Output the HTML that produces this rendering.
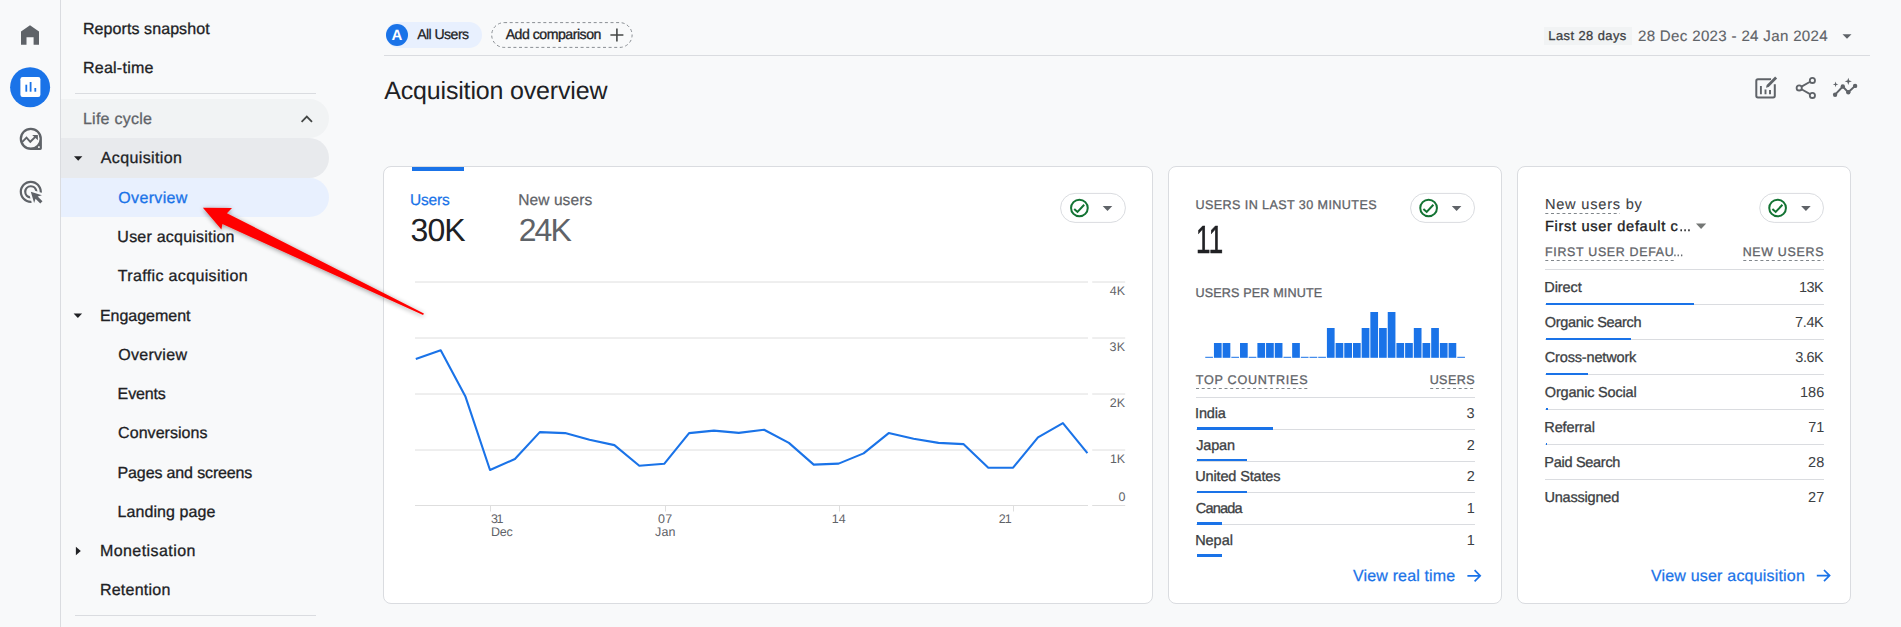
<!DOCTYPE html>
<html lang="en"><head><meta charset="utf-8"><title>Acquisition overview</title>
<style>
html,body{margin:0;padding:0}
body{width:1901px;height:627px;overflow:hidden;position:relative;background:#f8f9fa;font-family:"Liberation Sans",sans-serif;text-rendering:geometricPrecision;}
.t{position:absolute;white-space:nowrap;margin:0;padding:0}
.r{position:absolute}
svg{position:absolute;left:0;top:0;overflow:visible}
</style></head><body>
<div class="r" style="left:60px;top:0px;width:1px;height:627px;background:#dadce0;"></div>
<svg width="61" height="627" viewBox="0 0 61 627">
<path d="M21 44.8V31.4L30 25.3L39 31.4V44.8H33.6V37.3H26.5V44.8Z" fill="#5f6368"/>
<circle cx="30.1" cy="87.2" r="20" fill="#1a73e8"/>
<rect x="20.4" y="77" width="20" height="20" rx="2.2" fill="#fff"/>
<rect x="25.4" y="84.7" width="1.8" height="7" fill="#1a73e8"/>
<rect x="29.7" y="82" width="1.8" height="9.7" fill="#1a73e8"/>
<rect x="34.4" y="88" width="1.8" height="3.7" fill="#1a73e8"/>
<path fill-rule="evenodd" fill="#5f6368" d="M30.8 127.7A11.1 11.1 0 0 1 41.9 138.8V148.3A1.6 1.6 0 0 1 40.3 149.9H30.8A11.1 11.1 0 0 1 30.8 127.7ZM30.8 130A8.8 8.8 0 1 0 30.8 147.6A8.8 8.8 0 1 0 30.8 130ZM38.1 146.3h1.6v1.6h-1.6z"/>
<path d="M22.1 142.1l4.4-4.4 3.8 4.1 5-4.9" fill="none" stroke="#5f6368" stroke-width="1.9"/>
<path d="M32.2 135h5.7v5.2z" fill="#5f6368"/>
<g transform="translate(17.48 178.48) scale(1.11)"><path fill="#5f6368" d="M11.71 17.99A5.993 5.993 0 0 1 6 12c0-3.31 2.69-6 6-6 3.22 0 5.84 2.53 5.99 5.71l-2.1-.63a3.999 3.999 0 1 0-4.81 4.81l.63 2.1zM22 12c0 .3-.01.6-.04.9l-1.970-.59c.01-.1.01-.21.01-.31 0-4.42-3.58-8-8-8s-8 3.58-8 8 3.580 8 8 8c.1 0 .21 0 .31-.01l.59 1.970c-.3.03-.6.04-.9.04-5.520 0-10-4.480-10-10S6.480 2 12 2s10 4.480 10 10zm-3.770 4.260L22 15l-10-3 3 10 1.260-3.770 4.270 4.270 1.980-1.980-4.280-4.260z"/></g>
</svg>
<div class="r" style="left:61px;top:99px;width:268px;height:39px;background:#f1f3f4;border-radius:0 20px 20px 0"></div>
<div class="r" style="left:61px;top:138px;width:268px;height:39.5px;background:#e8eaed;border-radius:0 20px 20px 0"></div>
<div class="r" style="left:61px;top:177.5px;width:268px;height:39.5px;background:#e8f0fe;border-radius:0 20px 20px 0"></div>
<div class="r" style="left:75px;top:93px;width:241px;height:1px;background:#dadce0;"></div>
<div class="r" style="left:75px;top:615px;width:241px;height:1px;background:#dadce0;"></div>
<div class="t" style="font-size:16px;line-height:17px;top:21px;color:#202124;letter-spacing:0.081px;-webkit-text-stroke:0.3px #202124;left:82.99px;">Reports snapshot</div>
<div class="t" style="font-size:16px;line-height:17px;top:60px;color:#202124;letter-spacing:0.245px;-webkit-text-stroke:0.3px #202124;left:82.99px;">Real-time</div>
<div class="t" style="font-size:16px;line-height:17px;top:111px;color:#5f6368;letter-spacing:0.253px;-webkit-text-stroke:0.3px #5f6368;left:82.94px;">Life cycle</div>
<div class="t" style="font-size:16px;line-height:17px;top:150px;color:#202124;letter-spacing:0.378px;-webkit-text-stroke:0.3px #202124;left:100.77px;">Acquisition</div>
<div class="t" style="font-size:16px;line-height:17px;top:190px;color:#1a73e8;letter-spacing:0.347px;-webkit-text-stroke:0.3px #1a73e8;left:118.25px;">Overview</div>
<div class="t" style="font-size:16px;line-height:17px;top:229px;color:#202124;letter-spacing:0.222px;-webkit-text-stroke:0.3px #202124;left:117.37px;">User acquisition</div>
<div class="t" style="font-size:16px;line-height:17px;top:268px;color:#202124;letter-spacing:0.345px;-webkit-text-stroke:0.3px #202124;left:117.85px;">Traffic acquisition</div>
<div class="t" style="font-size:16px;line-height:17px;top:308px;color:#202124;letter-spacing:-0.013px;-webkit-text-stroke:0.3px #202124;left:99.89px;">Engagement</div>
<div class="t" style="font-size:16px;line-height:17px;top:347px;color:#202124;letter-spacing:0.304px;-webkit-text-stroke:0.3px #202124;left:118.15px;">Overview</div>
<div class="t" style="font-size:16px;line-height:17px;top:386px;color:#202124;letter-spacing:-0.125px;-webkit-text-stroke:0.3px #202124;left:117.59px;">Events</div>
<div class="t" style="font-size:16px;line-height:17px;top:425px;color:#202124;letter-spacing:0.045px;-webkit-text-stroke:0.3px #202124;left:118.10px;">Conversions</div>
<div class="t" style="font-size:16px;line-height:17px;top:465px;color:#202124;letter-spacing:-0.137px;-webkit-text-stroke:0.3px #202124;left:117.59px;">Pages and screens</div>
<div class="t" style="font-size:16px;line-height:17px;top:504px;color:#202124;letter-spacing:0.076px;-webkit-text-stroke:0.3px #202124;left:117.59px;">Landing page</div>
<div class="t" style="font-size:16px;line-height:17px;top:543px;color:#202124;letter-spacing:0.438px;-webkit-text-stroke:0.3px #202124;left:99.89px;">Monetisation</div>
<div class="t" style="font-size:16px;line-height:17px;top:582px;color:#202124;letter-spacing:0.243px;-webkit-text-stroke:0.3px #202124;left:99.89px;">Retention</div>
<svg width="340" height="627" viewBox="0 0 340 627">
<path d="M301.6 121.8l5.2-5.2 5.2 5.2" fill="none" stroke="#444746" stroke-width="1.8"/>
<path d="M74 156.2h8.4l-4.2 4.6z" fill="#202124"/>
<path d="M73.600 313.400h8.500l-4.250 4.700z" fill="#202124"/>
<path d="M75.900 546.800v8.500l4.900-4.250z" fill="#202124"/>
</svg>
<div class="r" style="left:386px;top:22px;width:96px;height:26px;background:#e8f0fe;border-radius:13px"></div>
<div class="r" style="left:386px;top:24px;width:22px;height:22px;background:#1a73e8;border-radius:11px"></div>
<div class="t" style="font-size:15px;line-height:17px;top:27px;color:#fff;font-weight:700;left:391.60px;">A</div>
<div class="t" style="font-size:14.1px;line-height:16px;top:26px;color:#202124;letter-spacing:-0.559px;-webkit-text-stroke:0.25px #202124;left:417.17px;">All Users</div>
<svg width="700" height="60"><rect x="491.7" y="22.6" width="140.4" height="24.8" rx="12.4" fill="none" stroke="#8a8f94" stroke-width="1" stroke-dasharray="3 2.6"/></svg>
<div class="t" style="font-size:14.1px;line-height:16px;top:26px;color:#202124;letter-spacing:-0.474px;-webkit-text-stroke:0.3px #202124;left:505.67px;">Add comparison</div>
<svg width="700" height="60"><path d="M610.4 35h13M616.9 28.5v13" stroke="#444746" stroke-width="1.6" fill="none"/></svg>
<div class="r" style="left:384px;top:55px;width:1486px;height:1px;background:#dadce0;"></div>
<div class="r" style="left:1544px;top:27px;width:88px;height:18px;background:#f1f3f4;"></div>
<div class="t" style="font-size:12.9px;line-height:15px;top:28px;color:#3c4043;letter-spacing:0.443px;-webkit-text-stroke:0.3px #3c4043;left:1548.34px;">Last 28 days</div>
<div class="t" style="font-size:15.1px;line-height:17px;top:28px;color:#5f6368;letter-spacing:0.318px;-webkit-text-stroke:0.15px #5f6368;left:1637.94px;">28 Dec 2023 - 24 Jan 2024</div>
<svg width="1901" height="120"><path d="M1842.5 34.2h9l-4.5 4.6z" fill="#5f6368"/></svg>
<div class="t" style="font-size:25px;line-height:28px;top:77px;color:#202124;letter-spacing:-0.174px;left:384.25px;">Acquisition overview</div>
<svg width="1901" height="120" viewBox="0 0 1901 120">
<g fill="none" stroke="#5f6368" stroke-width="2">
<path d="M1774.8 84.3v11.5a1.6 1.6 0 0 1-1.6 1.6h-15.3a1.6 1.6 0 0 1-1.6-1.6v-14.900a1.6 1.6 0 0 1 1.6-1.6h13.2"/>
<path d="M1760.9 86.1v8.2M1765.5 89.4v4.9M1770 89.9v4.4" stroke-width="1.9"/>
</g>
<path d="M1766 87.800l0.700-2.800 8.400-8.400 2 2-8.400 8.400z" fill="#5f6368" stroke="#f8f9fa" stroke-width="1.1" paint-order="stroke"/>
<g fill="none" stroke="#5f6368" stroke-width="1.8">
<circle cx="1812.4" cy="80.4" r="2.6"/><circle cx="1799.2" cy="87.9" r="2.6"/><circle cx="1812.4" cy="95.4" r="2.6"/>
<path d="M1801.5 86.6l8.6-4.9M1801.5 89.2l8.6 4.9"/>
</g>
<path d="M1835.1 94.7l7.7-8.2 5.5 5.8 6.8-6.4" fill="none" stroke="#5f6368" stroke-width="1.9"/>
<g fill="#5f6368"><circle cx="1835.1" cy="94.7" r="2.2"/><circle cx="1842.8" cy="86.5" r="2.2"/><circle cx="1848.3" cy="92.3" r="2.2"/><circle cx="1855.1" cy="85.9" r="2.2"/>
<path d="M1848.3 77.700l.9 2.700 2.700.9-2.700.9-.9 2.700-.9-2.700-2.700-.9 2.700-.9z"/>
<path d="M1835.6 81.6l.7 2.1 2.1.7-2.1.7-.7 2.1-.7-2.1-2.1-.7 2.1-.7z"/></g>
</svg>
<div class="r" style="left:383px;top:166px;width:768px;height:436px;background:#fff;border:1px solid #dadce0;border-radius:8px"></div>
<div class="r" style="left:1168px;top:166px;width:332px;height:436px;background:#fff;border:1px solid #dadce0;border-radius:8px"></div>
<div class="r" style="left:1517px;top:166px;width:332px;height:436px;background:#fff;border:1px solid #dadce0;border-radius:8px"></div>
<svg width="1901" height="627"><rect x="1060.55" y="193.4" width="64.90" height="29" rx="14.5" fill="#fff" stroke="#dadce0"/>
<circle cx="1079.4" cy="208" r="8.35" fill="none" stroke="#137333" stroke-width="2"/>
<path d="M1074.20 208.9l3.3 3 6.7-7.100" fill="none" stroke="#137333" stroke-width="2"/>
<path d="M1102.70 206h9.6l-4.8 5z" fill="#5f6368"/></svg>
<svg width="1901" height="627"><rect x="1410.55" y="193.4" width="64.00" height="29" rx="14.5" fill="#fff" stroke="#dadce0"/>
<circle cx="1428.6" cy="208" r="8.35" fill="none" stroke="#137333" stroke-width="2"/>
<path d="M1423.40 208.9l3.3 3 6.7-7.100" fill="none" stroke="#137333" stroke-width="2"/>
<path d="M1451.80 206h9.6l-4.8 5z" fill="#5f6368"/></svg>
<svg width="1901" height="627"><rect x="1759.70" y="193.4" width="63.80" height="29" rx="14.5" fill="#fff" stroke="#dadce0"/>
<circle cx="1777.6" cy="208" r="8.35" fill="none" stroke="#137333" stroke-width="2"/>
<path d="M1772.40 208.9l3.3 3 6.7-7.100" fill="none" stroke="#137333" stroke-width="2"/>
<path d="M1801.10 206h9.6l-4.8 5z" fill="#5f6368"/></svg>
<div class="r" style="left:412px;top:167px;width:52px;height:4px;background:#1a73e8;"></div>
<div class="t" style="font-size:15.5px;line-height:17px;top:192px;color:#1a73e8;letter-spacing:-0.131px;-webkit-text-stroke:0.25px #1a73e8;left:409.91px;">Users</div>
<div class="t" style="font-size:32px;line-height:36px;top:212px;color:#202124;letter-spacing:-0.985px;left:410.58px;">30K</div>
<div class="t" style="font-size:15.5px;line-height:17px;top:192px;color:#5f6368;letter-spacing:0.089px;-webkit-text-stroke:0.25px #5f6368;left:518.23px;">New users</div>
<div class="t" style="font-size:32px;line-height:36px;top:212px;color:#5f6368;letter-spacing:-1.943px;left:518.70px;">24K</div>
<svg width="1901" height="627"><path d="M415 282H1088M1092.2 282H1125.2" stroke="#dedede" stroke-width="1" fill="none"/><path d="M415 338H1088M1092.2 338H1125.2" stroke="#dedede" stroke-width="1" fill="none"/><path d="M415 394H1088M1092.2 394H1125.2" stroke="#dedede" stroke-width="1" fill="none"/><path d="M415 450H1088M1092.2 450H1125.2" stroke="#dedede" stroke-width="1" fill="none"/><path d="M415 505.5H1088M1092.2 505.5H1125.2" stroke="#dedede" stroke-width="1" fill="none"/><path d="M490.5 506v5.5" stroke="#dedede" stroke-width="1"/><path d="M665.5 506v5.5" stroke="#dedede" stroke-width="1"/><path d="M839.5 506v5.5" stroke="#dedede" stroke-width="1"/><path d="M1013.5 506v5.5" stroke="#dedede" stroke-width="1"/><polyline fill="none" stroke="#1a73e8" stroke-width="2.1" stroke-linejoin="round" points="415.8,358.9 440.7,350.2 465.3,396.2 490,470 514.9,459 539.8,432.1 565.1,433.1 589.5,439.8 614.4,445.1 639.3,465.7 664.2,463.8 689.1,433.1 713.9,430.6 738.8,432.9 764.1,429.7 788.9,442.9 813.7,464.6 838.6,463.6 863.6,453.4 888.7,433.1 913.6,438.7 938.5,442.9 963.4,444.1 988.3,467.7 1013.1,467.7 1038,437.3 1062.9,423.2 1087.4,453.2"/></svg>
<div class="t" style="font-size:12.5px;line-height:14px;top:284px;color:#5f6368;letter-spacing:-0.077px;left:1109.82px;">4K</div>
<div class="t" style="font-size:12.5px;line-height:14px;top:340px;color:#5f6368;letter-spacing:0.123px;left:1109.62px;">3K</div>
<div class="t" style="font-size:12.5px;line-height:14px;top:396px;color:#5f6368;letter-spacing:-0.027px;left:1109.78px;">2K</div>
<div class="t" style="font-size:12.5px;line-height:14px;top:452px;color:#5f6368;letter-spacing:-0.302px;left:1110.05px;">1K</div>
<div class="t" style="font-size:12.5px;line-height:14px;top:490px;color:#5f6368;left:1118.42px;">0</div>
<div class="t" style="font-size:12.5px;line-height:14px;top:512px;color:#5f6368;letter-spacing:-1.427px;left:491.02px;">31</div>
<div class="t" style="font-size:12.5px;line-height:14px;top:525px;color:#5f6368;letter-spacing:-0.140px;left:490.88px;">Dec</div>
<div class="t" style="font-size:12.5px;line-height:14px;top:512px;color:#5f6368;letter-spacing:0.200px;left:658.12px;">07</div>
<div class="t" style="font-size:12.5px;line-height:14px;top:525px;color:#5f6368;letter-spacing:0.200px;left:655.03px;">Jan</div>
<div class="t" style="font-size:12.5px;line-height:14px;top:512px;color:#5f6368;letter-spacing:0.200px;left:831.66px;">14</div>
<div class="t" style="font-size:12.5px;line-height:14px;top:512px;color:#5f6368;letter-spacing:-1.077px;left:998.77px;">21</div>
<div class="t" style="font-size:12.6px;line-height:14px;top:198px;color:#5f6368;letter-spacing:0.405px;-webkit-text-stroke:0.3px #5f6368;left:1195.43px;">USERS IN LAST 30 MINUTES</div>
<div class="t" style="font-size:39.2px;line-height:43px;top:219px;color:#202124;letter-spacing:0.537px;transform:scaleX(0.66);transform-origin:0 0;-webkit-text-stroke:0.7px #202124;left:1195.73px;">11</div>
<div class="t" style="font-size:12.6px;line-height:14px;top:286px;color:#5f6368;letter-spacing:0.152px;-webkit-text-stroke:0.3px #5f6368;left:1195.43px;">USERS PER MINUTE</div>
<svg width="1901" height="627"><rect x="1205.25" y="356.80" width="7.7" height="1" fill="#1a73e8"/><rect x="1213.94" y="343.00" width="7.7" height="14.8" fill="#1a73e8"/><rect x="1222.63" y="343.00" width="7.7" height="14.8" fill="#1a73e8"/><rect x="1231.32" y="356.80" width="7.7" height="1" fill="#1a73e8"/><rect x="1240.01" y="343.00" width="7.7" height="14.8" fill="#1a73e8"/><rect x="1248.70" y="356.80" width="7.7" height="1" fill="#1a73e8"/><rect x="1257.39" y="343.00" width="7.7" height="14.8" fill="#1a73e8"/><rect x="1266.08" y="343.00" width="7.7" height="14.8" fill="#1a73e8"/><rect x="1274.77" y="343.00" width="7.7" height="14.8" fill="#1a73e8"/><rect x="1283.46" y="356.80" width="7.7" height="1" fill="#1a73e8"/><rect x="1292.15" y="343.00" width="7.7" height="14.8" fill="#1a73e8"/><rect x="1300.84" y="356.80" width="7.7" height="1" fill="#1a73e8"/><rect x="1309.53" y="356.80" width="7.7" height="1" fill="#1a73e8"/><rect x="1318.22" y="356.80" width="7.7" height="1" fill="#1a73e8"/><rect x="1326.91" y="328.00" width="7.7" height="29.8" fill="#1a73e8"/><rect x="1335.60" y="343.00" width="7.7" height="14.8" fill="#1a73e8"/><rect x="1344.29" y="343.00" width="7.7" height="14.8" fill="#1a73e8"/><rect x="1352.98" y="343.00" width="7.7" height="14.8" fill="#1a73e8"/><rect x="1361.67" y="328.00" width="7.7" height="29.8" fill="#1a73e8"/><rect x="1370.36" y="312.00" width="7.7" height="45.8" fill="#1a73e8"/><rect x="1379.05" y="328.00" width="7.7" height="29.8" fill="#1a73e8"/><rect x="1387.74" y="312.00" width="7.7" height="45.8" fill="#1a73e8"/><rect x="1396.43" y="343.00" width="7.7" height="14.8" fill="#1a73e8"/><rect x="1405.12" y="343.00" width="7.7" height="14.8" fill="#1a73e8"/><rect x="1413.81" y="328.00" width="7.7" height="29.8" fill="#1a73e8"/><rect x="1422.50" y="343.00" width="7.7" height="14.8" fill="#1a73e8"/><rect x="1431.19" y="328.00" width="7.7" height="29.8" fill="#1a73e8"/><rect x="1439.88" y="343.00" width="7.7" height="14.8" fill="#1a73e8"/><rect x="1448.57" y="343.00" width="7.7" height="14.8" fill="#1a73e8"/><rect x="1457.26" y="356.80" width="7.7" height="1" fill="#1a73e8"/></svg>
<div class="t" style="font-size:12.6px;line-height:14px;top:373px;color:#5f6368;letter-spacing:0.733px;-webkit-text-stroke:0.3px #5f6368;left:1195.72px;">TOP COUNTRIES</div>
<div class="t" style="font-size:12.6px;line-height:14px;top:373px;color:#5f6368;letter-spacing:0.381px;-webkit-text-stroke:0.3px #5f6368;left:1429.63px;">USERS</div>
<div class="r" style="left:1196px;top:397px;width:278.6px;height:1px;background:#dadce0;"></div>
<div class="r" style="left:1196px;top:429px;width:278.6px;height:1px;background:#dadce0;"></div>
<div class="r" style="left:1196px;top:460.5px;width:278.6px;height:1px;background:#dadce0;"></div>
<div class="r" style="left:1196px;top:492px;width:278.6px;height:1px;background:#dadce0;"></div>
<div class="r" style="left:1196px;top:523.5px;width:278.6px;height:1px;background:#dadce0;"></div>
<div class="t" style="font-size:14.5px;line-height:16px;top:406px;color:#3c4043;letter-spacing:-0.155px;-webkit-text-stroke:0.3px #3c4043;left:1195.07px;">India</div>
<div class="t" style="font-size:14.5px;line-height:16px;top:406px;color:#3c4043;left:1466.56px;">3</div>
<div class="r" style="left:1196.6px;top:427.2px;width:76.40000000000009px;height:2.8px;background:#1a73e8;"></div>
<div class="t" style="font-size:14.5px;line-height:16px;top:438px;color:#3c4043;letter-spacing:-0.165px;-webkit-text-stroke:0.3px #3c4043;left:1196.18px;">Japan</div>
<div class="t" style="font-size:14.5px;line-height:16px;top:438px;color:#3c4043;left:1466.66px;">2</div>
<div class="r" style="left:1196.6px;top:458.9px;width:50.40000000000009px;height:2.2px;background:#1a73e8;"></div>
<div class="t" style="font-size:14.5px;line-height:16px;top:469px;color:#3c4043;letter-spacing:-0.151px;-webkit-text-stroke:0.3px #3c4043;left:1195.28px;">United States</div>
<div class="t" style="font-size:14.5px;line-height:16px;top:469px;color:#3c4043;left:1466.66px;">2</div>
<div class="r" style="left:1196.6px;top:490.8px;width:50.40000000000009px;height:2.4px;background:#1a73e8;"></div>
<div class="t" style="font-size:14.5px;line-height:16px;top:501px;color:#3c4043;letter-spacing:-0.756px;-webkit-text-stroke:0.3px #3c4043;left:1195.68px;">Canada</div>
<div class="t" style="font-size:14.5px;line-height:16px;top:501px;color:#3c4043;left:1466.63px;">1</div>
<div class="r" style="left:1196.6px;top:522.4px;width:25.40000000000009px;height:2.7px;background:#1a73e8;"></div>
<div class="t" style="font-size:14.5px;line-height:16px;top:533px;color:#3c4043;letter-spacing:-0.059px;-webkit-text-stroke:0.3px #3c4043;left:1195.21px;">Nepal</div>
<div class="t" style="font-size:14.5px;line-height:16px;top:533px;color:#3c4043;left:1466.63px;">1</div>
<div class="r" style="left:1196.6px;top:554.4px;width:25.40000000000009px;height:2.6px;background:#1a73e8;"></div>
<div class="t" style="font-size:16px;line-height:17px;top:568px;color:#1a73e8;letter-spacing:0.152px;-webkit-text-stroke:0.25px #1a73e8;left:1353.04px;">View real time</div>
<svg width="1901" height="627"><path d="M1467.4 575.8h12.6M1474.600 570.2l5.6 5.6-5.6 5.6" fill="none" stroke="#1a73e8" stroke-width="1.7"/></svg>
<div class="t" style="font-size:14.6px;line-height:16px;top:197px;color:#3c4043;letter-spacing:0.780px;-webkit-text-stroke:0.1px #3c4043;left:1544.90px;">New users by</div>
<div class="t" style="font-size:14.6px;line-height:16px;top:219px;color:#202124;letter-spacing:0.684px;-webkit-text-stroke:0.35px #202124;left:1544.90px;">First user default c<span style="display:inline-block;letter-spacing:0;margin-left:-0.11px;transform:scaleX(0.835);transform-origin:0 0">…</span></div>
<svg width="1901" height="627"><path d="M1696 223.6h10.2l-5.1 5.4z" fill="#747775"/></svg>
<div class="t" style="font-size:12.4px;line-height:14px;top:245px;color:#5f6368;letter-spacing:0.692px;-webkit-text-stroke:0.3px #5f6368;left:1545.08px;">FIRST USER DEFAU<span style="display:inline-block;letter-spacing:0;margin-left:-0.86px;transform:scaleX(0.851);transform-origin:0 0">…</span></div>
<div class="t" style="font-size:12.4px;line-height:14px;top:245px;color:#5f6368;letter-spacing:0.710px;-webkit-text-stroke:0.3px #5f6368;left:1742.68px;">NEW USERS</div>
<div class="r" style="left:1545.2px;top:269px;width:278.6px;height:1px;background:#dadce0;"></div>
<div class="t" style="font-size:14.5px;line-height:16px;top:280px;color:#3c4043;letter-spacing:-0.075px;-webkit-text-stroke:0.3px #3c4043;left:1544.31px;">Direct</div>
<div class="t" style="font-size:14.5px;line-height:16px;top:280px;color:#3c4043;letter-spacing:-0.469px;left:1798.90px;">13K</div>
<div class="r" style="left:1545.2px;top:304px;width:278.8px;height:1px;background:#dadce0;"></div>
<div class="r" style="left:1546px;top:303px;width:148px;height:2.2px;background:#1a73e8;"></div>
<div class="t" style="font-size:14.5px;line-height:16px;top:315px;color:#3c4043;letter-spacing:-0.310px;-webkit-text-stroke:0.3px #3c4043;left:1544.82px;">Organic Search</div>
<div class="t" style="font-size:14.5px;line-height:16px;top:315px;color:#3c4043;letter-spacing:-0.377px;left:1795.06px;">7.4K</div>
<div class="r" style="left:1545.2px;top:339px;width:278.8px;height:1px;background:#dadce0;"></div>
<div class="r" style="left:1546px;top:338px;width:84.9px;height:2.2px;background:#1a73e8;"></div>
<div class="t" style="font-size:14.5px;line-height:16px;top:350px;color:#3c4043;letter-spacing:-0.156px;-webkit-text-stroke:0.3px #3c4043;left:1544.78px;">Cross-network</div>
<div class="t" style="font-size:14.5px;line-height:16px;top:350px;color:#3c4043;letter-spacing:-0.439px;left:1795.25px;">3.6K</div>
<div class="r" style="left:1545.2px;top:374px;width:278.8px;height:1px;background:#dadce0;"></div>
<div class="r" style="left:1546px;top:373px;width:42px;height:2.2px;background:#1a73e8;"></div>
<div class="t" style="font-size:14.5px;line-height:16px;top:385px;color:#3c4043;letter-spacing:-0.189px;-webkit-text-stroke:0.3px #3c4043;left:1544.82px;">Organic Social</div>
<div class="t" style="font-size:14.5px;line-height:16px;top:385px;color:#3c4043;letter-spacing:0.067px;left:1799.90px;">186</div>
<div class="r" style="left:1545.2px;top:409px;width:278.8px;height:1px;background:#dadce0;"></div>
<div class="r" style="left:1545.6px;top:408px;width:2.2px;height:2px;background:#1a73e8;"></div>
<div class="t" style="font-size:14.5px;line-height:16px;top:420px;color:#3c4043;letter-spacing:-0.132px;-webkit-text-stroke:0.3px #3c4043;left:1544.31px;">Referral</div>
<div class="t" style="font-size:14.5px;line-height:16px;top:420px;color:#3c4043;letter-spacing:-0.191px;left:1808.36px;">71</div>
<div class="r" style="left:1545.2px;top:444px;width:278.8px;height:1px;background:#dadce0;"></div>
<div class="r" style="left:1545.6px;top:443px;width:1px;height:2px;background:#1a73e8;"></div>
<div class="t" style="font-size:14.5px;line-height:16px;top:455px;color:#3c4043;letter-spacing:-0.287px;-webkit-text-stroke:0.3px #3c4043;left:1544.31px;">Paid Search</div>
<div class="t" style="font-size:14.5px;line-height:16px;top:455px;color:#3c4043;letter-spacing:0.122px;left:1807.98px;">28</div>
<div class="r" style="left:1545.2px;top:479px;width:278.8px;height:1px;background:#dadce0;"></div>
<div class="t" style="font-size:14.5px;line-height:16px;top:490px;color:#3c4043;letter-spacing:-0.192px;-webkit-text-stroke:0.3px #3c4043;left:1544.38px;">Unassigned</div>
<div class="t" style="font-size:14.5px;line-height:16px;top:490px;color:#3c4043;letter-spacing:0.224px;left:1807.98px;">27</div>
<div class="t" style="font-size:16px;line-height:17px;top:568px;color:#1a73e8;letter-spacing:0.194px;-webkit-text-stroke:0.25px #1a73e8;left:1650.94px;">View user acquisition</div>
<svg width="1901" height="627"><path d="M1816.800 575.600h12.600M1824 570l5.600 5.600-5.600 5.600" fill="none" stroke="#1a73e8" stroke-width="1.7"/></svg>
<svg width="1901" height="627"><g stroke="#80868b" stroke-width="1" stroke-dasharray="3 2.7" fill="none"><path d="M1196 388.5H1307.5"/><path d="M1430.2 388.5H1474.5"/><path d="M1545.3 213.5H1619.8"/><path d="M1545.3 260.5H1674.2"/><path d="M1743.3 260.5H1823.7"/></g></svg>
<svg width="1901" height="627" viewBox="0 0 1901 627">
<defs><filter id="sh" x="-20%" y="-20%" width="140%" height="150%"><feGaussianBlur in="SourceAlpha" stdDeviation="2.6"/><feOffset dx="0" dy="0.8"/><feComponentTransfer><feFuncA type="linear" slope="0.42"/></feComponentTransfer><feMerge><feMergeNode/><feMergeNode in="SourceGraphic"/></feMerge></filter></defs>
<path d="M202.9 207.8L232 208.1L226.9 213.2L423.9 313.6L423.1 315.1L222.4 224.1L221.4 229.5Z" fill="#ff0000" filter="url(#sh)"/>
</svg>
</body></html>
